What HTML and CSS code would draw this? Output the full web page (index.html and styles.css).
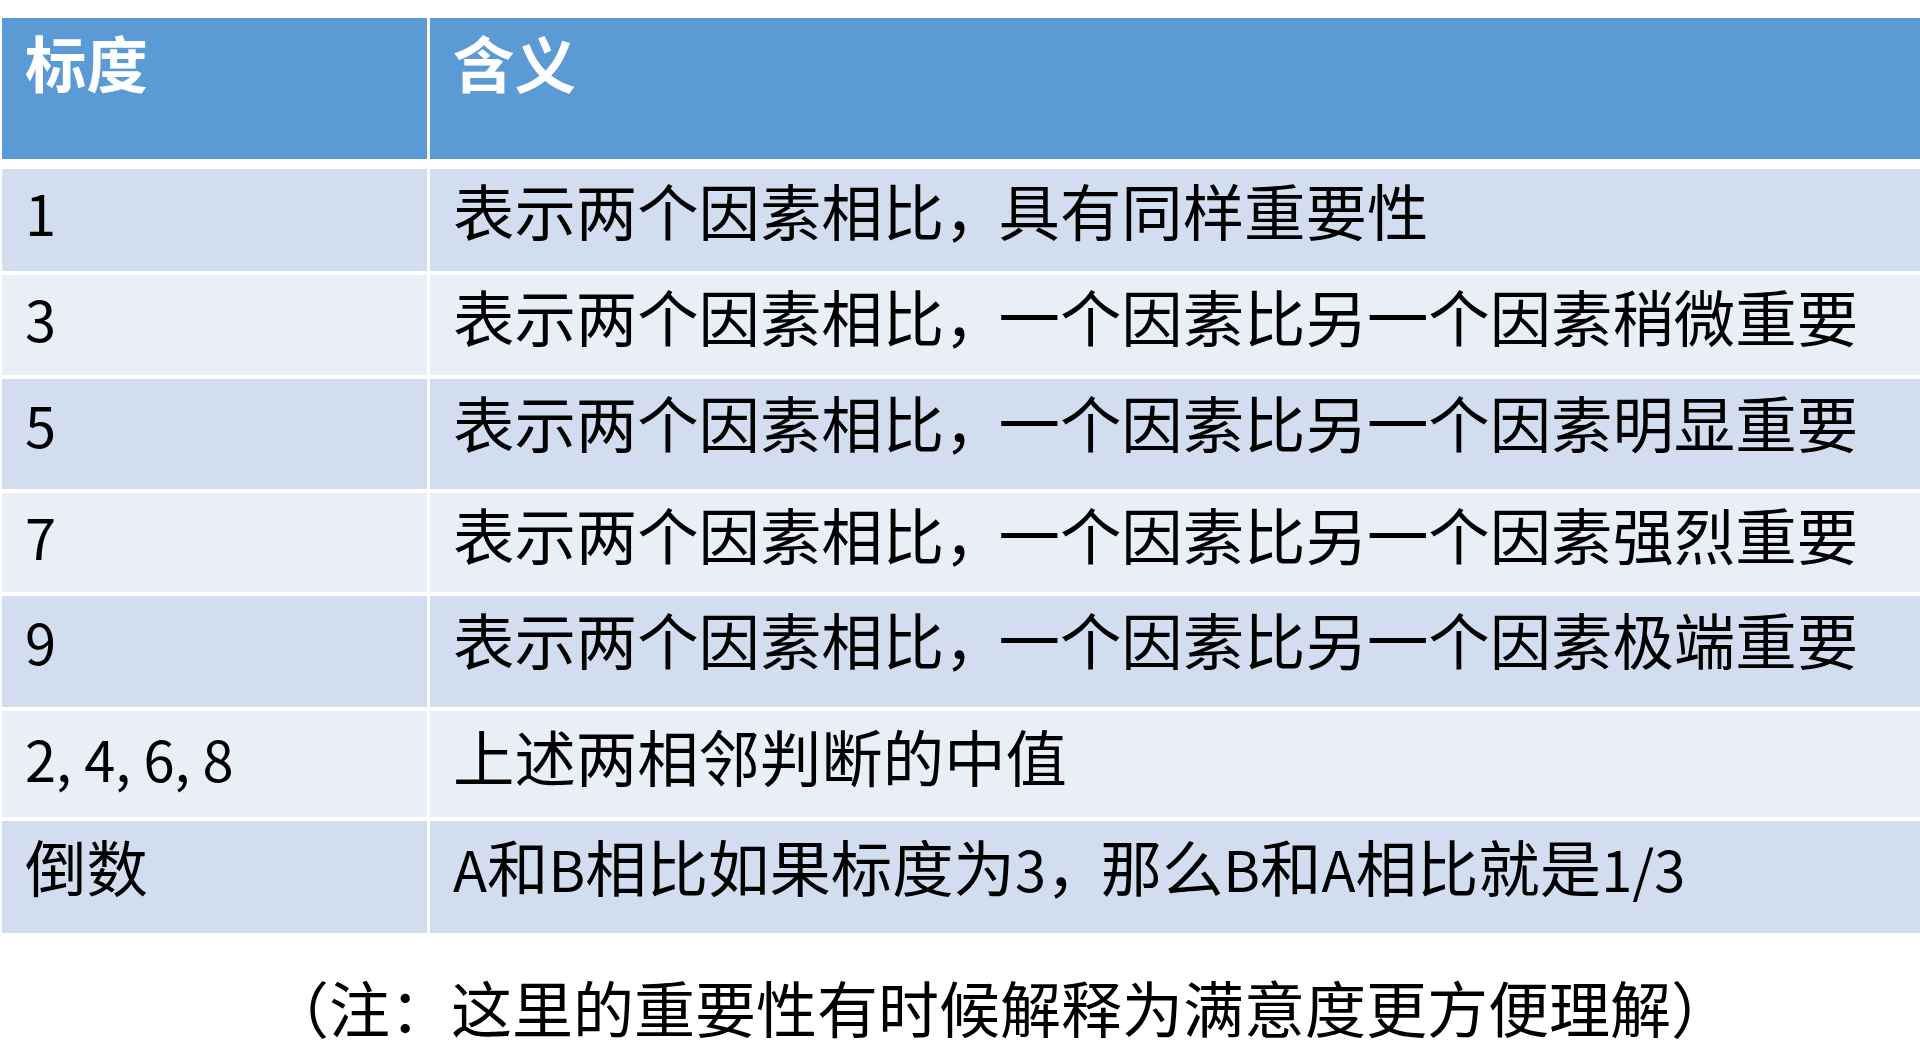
FILE: index.html
```html
<!DOCTYPE html>
<html lang="zh-CN">
<head>
<meta charset="utf-8">
<title>标度含义</title>
<link rel="stylesheet" href="styles.css">
</head>
<body>
<div class="page">
  <div class="table">
    <div class="head">
      <div class="cell">标度</div>
      <div class="cell">含义</div>
    </div>
    <div class="body">
      <div class="row odd r1">
        <div class="cell"><span class="lat">1</span></div>
        <div class="cell">表示两个因素相比<span class="cm">，</span>具有同样重要性</div>
      </div>
      <div class="row even r2">
        <div class="cell"><span class="lat">3</span></div>
        <div class="cell">表示两个因素相比<span class="cm">，</span>一个因素比另一个因素稍微重要</div>
      </div>
      <div class="row odd r3">
        <div class="cell"><span class="lat">5</span></div>
        <div class="cell">表示两个因素相比<span class="cm">，</span>一个因素比另一个因素明显重要</div>
      </div>
      <div class="row even r4">
        <div class="cell"><span class="lat">7</span></div>
        <div class="cell">表示两个因素相比<span class="cm">，</span>一个因素比另一个因素强烈重要</div>
      </div>
      <div class="row odd r5">
        <div class="cell"><span class="lat">9</span></div>
        <div class="cell">表示两个因素相比<span class="cm">，</span>一个因素比另一个因素极端重要</div>
      </div>
      <div class="row even r6">
        <div class="cell"><span class="lat">2, 4, 6, 8</span></div>
        <div class="cell">上述两相邻判断的中值</div>
      </div>
      <div class="row odd r7">
        <div class="cell">倒数</div>
        <div class="cell"><span class="lat">A</span>和<span class="lat">B</span>相比如果标度为<span class="lat">3</span><span class="cm">，</span>那么<span class="lat">B</span>和<span class="lat">A</span>相比就是<span class="lat">1/3</span></div>
      </div>
    </div>
  </div>
  <p class="note">（注：这里的重要性有时候解释为满意度更方便理解）</p>
</div>
</body>
</html>
```

FILE: styles.css
```css
html, body {
  margin: 0;
  padding: 0;
  background: #ffffff;
}

body {
  font-family: "Noto Sans CJK SC", "Noto Sans", sans-serif;
  color: #000000;
}

.page {
  width: 1920px;
  height: 1051px;
  overflow: hidden;
  padding-top: 18px;
  box-sizing: border-box;
}

.table {
  margin-left: 2px;
  display: flex;
  flex-direction: column;
}

.head,
.row {
  display: grid;
  grid-template-columns: 425px 1fr;
  column-gap: 3px;
}

.head {
  height: 141px;
  margin-bottom: 10px;
}

.head .cell {
  background: #5b9bd5;
  color: #ffffff;
  font-weight: 700;
  padding-top: 13px;
}

.body {
  display: flex;
  flex-direction: column;
  gap: 4px;
}

.cell {
  font-size: 61.4px;
  line-height: 62px;
  padding-left: 23px;
  padding-top: 10px;
  box-sizing: border-box;
  white-space: nowrap;
}

.odd .cell { background: #d2deef; }
.even .cell { background: #eaeff7; }

.r1 { height: 102px; }
.r2 { height: 100px; }
.r3 { height: 110px; }
.r4 { height: 99px; }
.r5 { height: 111px; }
.r6 { height: 106px; }
.r7 { height: 112px; }

.r3 .cell, .r5 .cell { padding-top: 12px; }
.r6 .cell, .r7 .cell { padding-top: 14px; }

.lat {
  font-size: 56px;
}

.cm {
  letter-spacing: -7px;
}

.note {
  margin: 43px 0 0 0;
  padding-left: 80px;
  text-align: center;
  font-size: 61px;
  line-height: 62px;
  white-space: nowrap;
}
```
